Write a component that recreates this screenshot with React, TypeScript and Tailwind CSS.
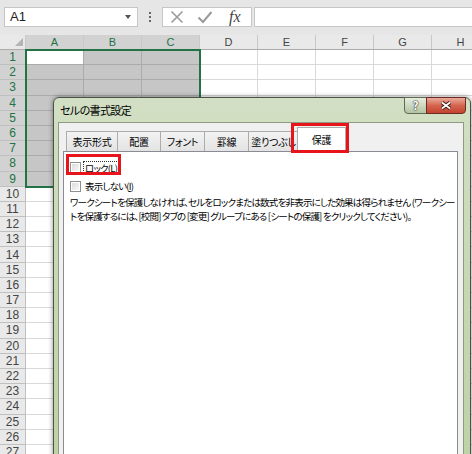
import React from "react";

const cols = ["A", "B", "C", "D", "E", "F", "G", "H"];
const rows = Array.from({ length: 27 }, (_, i) => i + 1);

const tabs = [
  { label: "表示形式", w: "w-[52px]" },
  { label: "配置", w: "w-[44px]" },
  { label: "フォント", w: "w-[45px]" },
  { label: "罫線", w: "w-[45px]" },
  { label: "塗りつぶし", w: "w-[51px]" },
];

function isSel(r: number, c: number) {
  return r <= 9 && c <= 2;
}

function Checkbox() {
  return (
    <span className="flex h-[11px] w-[11px] shrink-0 items-center justify-center border border-[#8e8f8f] bg-white">
      <span className="h-[7px] w-[7px] bg-gradient-to-br from-[#dcdcdc] to-[#f8f8f8]" />
    </span>
  );
}

function FormatDialog() {
  return (
    <div className="absolute left-[53px] top-[97px] z-20 flex h-[380px] w-[418px] flex-col rounded-t-[6px] border border-[#4b5346] bg-gradient-to-b from-[#d2dfc4] via-[#c6d8b2] to-[#bdd1a6] shadow-[0_0_5px_rgba(0,0,0,0.45)] font-['Noto_Sans_CJK_JP',sans-serif] [font-feature-settings:'palt']">
      {/* タイトルバー */}
      <div className="relative flex h-[24px] shrink-0 items-center pl-[6px] text-[11px] tracking-[-0.6px] text-black">
        セルの書式設定
        <div className="absolute right-[4px] top-[-1px] flex tracking-normal">
          <div className="flex h-[17px] w-[23px] items-center justify-center rounded-bl-[4px] border border-[#5d6b55] bg-gradient-to-b from-[#e6eddf] to-[#b3c4a3] text-[11px] font-bold text-white [text-shadow:0_0_1px_#222,0_0_2px_#222]">
            ?
          </div>
          <div className="-ml-px flex h-[17px] w-[40px] items-center justify-center rounded-br-[4px] border border-[#6b2a22] bg-gradient-to-b from-[#e9ab9b] via-[#d4644f] to-[#c4432f]">
            <svg width="12" height="9" viewBox="0 0 12 9">
              <path d="M2 1.5 L10 7.5 M10 1.5 L2 7.5" stroke="#3a1a14" strokeWidth="3.6" />
              <path d="M2 1.5 L10 7.5 M10 1.5 L2 7.5" stroke="#fff" strokeWidth="1.8" />
            </svg>
          </div>
        </div>
      </div>

      {/* クライアント領域 */}
      <div className="ml-[4px] mr-[6px] flex flex-1 flex-col border border-[#8d9b82] bg-[#f0f0f0] pl-[4px] pr-[5px] pt-[4px]">
        <div className="relative z-10 flex h-[24px] items-end pl-[3px] text-[10px] tracking-[-0.3px] text-black">
          {tabs.map((t, i) => (
            <div
              key={t.label}
              className={`${t.w} ${i > 0 ? "-ml-px" : ""} flex h-[20px] items-center justify-center border border-b-0 border-[#acacac] bg-gradient-to-b from-[#f3f3f3] to-[#e3e3e3]`}
            >
              {t.label}
            </div>
          ))}
          <div className="relative -mb-px -ml-[2px] flex h-[25px] w-[49px] items-center justify-center border border-b-0 border-[#acacac] bg-white pb-[2px]">
            保護
            <div className="absolute left-[-7px] top-[-5px] h-[30px] w-[58px] border-[3px] border-[#e8141b]" />
          </div>
        </div>

        <div className="relative flex-1 border border-[#898c95] bg-white pl-[6px] pt-[6px] text-[9.5px] tracking-[-0.8px] text-black">
          <div className="flex h-[19px] items-center gap-[2px]">
            <Checkbox />
            <span className="border border-dotted border-[#333] px-[1px] leading-[12px]">
              ロック(<span className="underline">L</span>)
            </span>
          </div>
          <div className="flex h-[18px] items-center gap-[3px]">
            <Checkbox />
            <span className="px-[1px]">
              表示しない(<span className="underline">I</span>)
            </span>
          </div>
          <p className="whitespace-nowrap leading-[14px]">
            ワークシートを保護しなければ、セルをロックまたは数式を非表示にした効果は得られません (ワークシー
            <br />
            トを保護するには、[校閲] タブの [変更] グループにある [シートの保護] をクリックしてください)。
          </p>
          <div className="absolute left-[2px] top-[2px] h-[21px] w-[55px] border-[3px] border-[#e8141b]" />
        </div>
      </div>
    </div>
  );
}

export default function App() {
  return (
    <div className="relative h-[454px] w-[472px] overflow-hidden bg-white font-['Liberation_Sans',sans-serif]">
      {/* 名前ボックス・数式バー */}
      <div className="flex h-[35px] items-start bg-[#e6e6e6] pt-[7px]">
        <div className="ml-[4px] flex h-[20px] w-[134px] items-center justify-between border border-[#c6c6c6] bg-white pl-[5px] pr-[6px] text-[13px] text-[#222]">
          <span>A1</span>
          <span className="h-0 w-0 border-x-[3.5px] border-t-[4px] border-x-transparent border-t-[#555]" />
        </div>
        <div className="ml-[11px] mt-[5px] flex flex-col gap-[2px]">
          <span className="h-[2px] w-[2px] bg-[#666]" />
          <span className="h-[2px] w-[2px] bg-[#666]" />
          <span className="h-[2px] w-[2px] bg-[#666]" />
        </div>
        <div className="ml-[11px] flex h-[20px] w-[90px] items-center border border-[#c6c6c6] bg-white">
          <svg className="ml-[7px]" width="14" height="14" viewBox="0 0 14 14">
            <path d="M1.5 1.5 L12.5 12.5 M12.5 1.5 L1.5 12.5" stroke="#9a9a9a" strokeWidth="1.6" />
          </svg>
          <svg className="ml-[13px]" width="16" height="14" viewBox="0 0 16 14">
            <path d="M1.5 7.5 L6 12 L14.5 2" stroke="#9a9a9a" strokeWidth="2" fill="none" />
          </svg>
          <span className="ml-[16px] font-['Liberation_Serif',serif] text-[16px] italic leading-none text-[#444]">
            fx
          </span>
        </div>
        <div className="ml-[2px] h-[20px] flex-1 border border-r-0 border-[#c6c6c6] bg-white" />
      </div>

      {/* 列見出し */}
      <div className="flex h-[15px] border-b border-[#ababab] bg-[#e9e9e9] text-[11px] text-[#444]">
        <div className="relative w-[26px] shrink-0 border-r border-[#c8c8c8]">
          <span className="absolute bottom-[3px] right-[2px] h-0 w-0 border-b-[8px] border-l-[8px] border-b-[#b4b4b4] border-l-transparent" />
        </div>
        {cols.map((c, i) => (
          <div
            key={c}
            className={`flex w-[58px] shrink-0 items-center justify-center border-r border-[#c8c8c8] ${
              i <= 2 ? "bg-[#d2d2d2] text-[#217346]" : ""
            }`}
          >
            {c}
          </div>
        ))}
      </div>

      {/* 行 */}
      {rows.map((r) => (
        <div key={r} className="flex h-[15.2px]">
          <div
            className={`flex w-[26px] shrink-0 items-center justify-center border-b border-r border-[#c0c0c0] text-[12px] ${
              r <= 9 ? "bg-[#d2d2d2] text-[#217346]" : "bg-[#e9e9e9] text-[#444]"
            }`}
          >
            {r}
          </div>
          {cols.map((c, ci) => (
            <div
              key={c}
              className={`w-[58px] shrink-0 border-b border-r ${
                isSel(r, ci)
                  ? r === 1 && ci === 0
                    ? "border-[#ababab] bg-white"
                    : "border-[#ababab] bg-[#c6c6c6]"
                  : "border-[#d9d9d9]"
              }`}
            />
          ))}
        </div>
      ))}

      {/* 選択範囲 A1:C9 */}
      <div className="pointer-events-none absolute left-[25px] top-[49px] z-10 h-[139px] w-[176px] border-2 border-[#217346]" />

      <FormatDialog />
    </div>
  );
}
